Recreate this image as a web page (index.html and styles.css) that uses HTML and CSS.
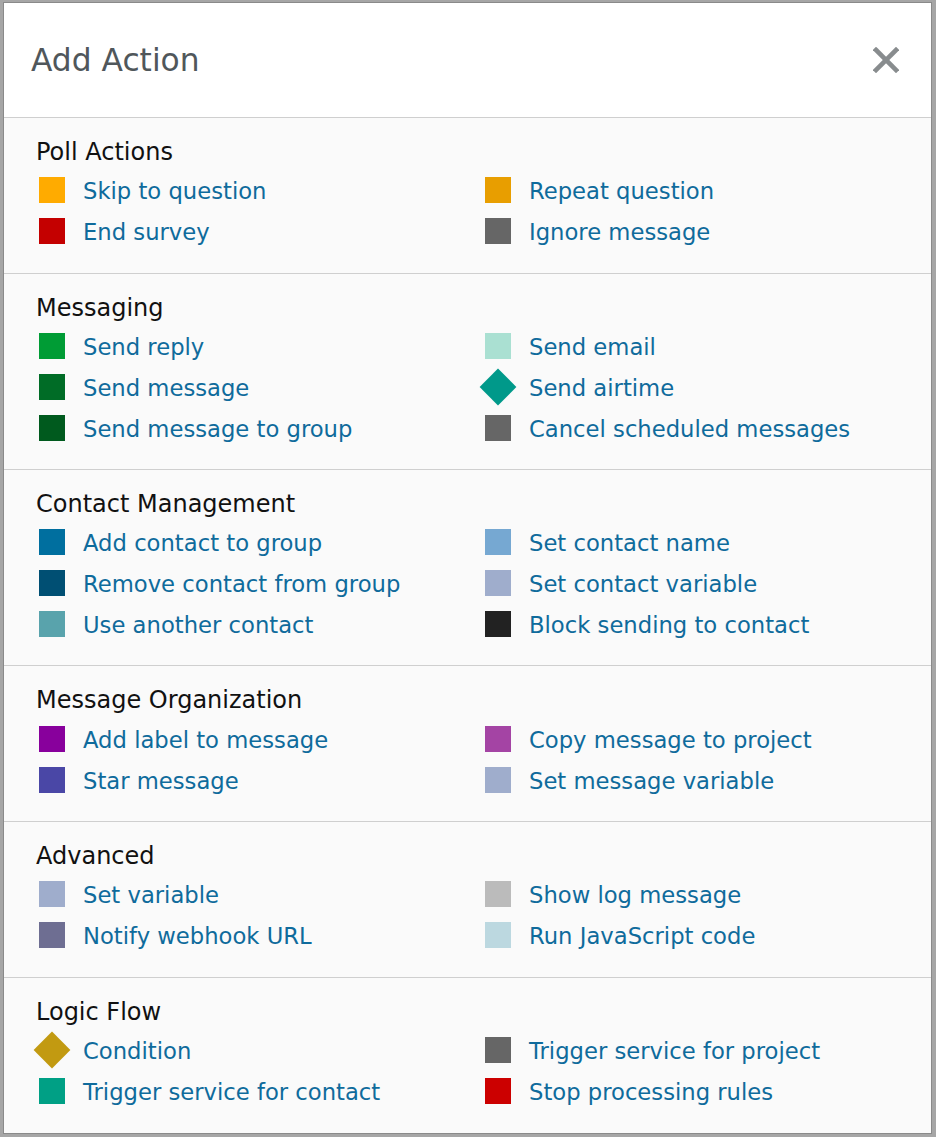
FILE: index.html
```html
<!DOCTYPE html>
<html>
<head>
<meta charset="utf-8">
<title>Add Action</title>
<link rel="stylesheet" href="styles.css">
</head>
<body>
<div class="modal">
  <div class="modal-header">
    <h1 class="modal-title">Add Action</h1>
    <svg class="close" width="26" height="26" viewBox="0 0 26 26" aria-label="Close">
      <line x1="3" y1="3" x2="23" y2="23" />
      <line x1="23" y1="3" x2="3" y2="23" />
    </svg>
  </div>
  <div class="modal-body">
    <section class="group">
      <h2 class="group-title">Poll Actions</h2>
      <div class="items">
        <a class="item"><span class="ico"><span class="sq c-skip"></span></span>Skip to question</a>
        <a class="item"><span class="ico"><span class="sq c-repeat"></span></span>Repeat question</a>
        <a class="item"><span class="ico"><span class="sq c-end"></span></span>End survey</a>
        <a class="item"><span class="ico"><span class="sq c-gray"></span></span>Ignore message</a>
      </div>
    </section>
    <section class="group">
      <h2 class="group-title">Messaging</h2>
      <div class="items">
        <a class="item"><span class="ico"><span class="sq c-reply"></span></span>Send reply</a>
        <a class="item"><span class="ico"><span class="sq c-email"></span></span>Send email</a>
        <a class="item"><span class="ico"><span class="sq c-msg"></span></span>Send message</a>
        <a class="item"><span class="ico"><span class="sq dia c-airtime"></span></span>Send airtime</a>
        <a class="item"><span class="ico"><span class="sq c-msggroup"></span></span>Send message to group</a>
        <a class="item"><span class="ico"><span class="sq c-gray"></span></span>Cancel scheduled messages</a>
      </div>
    </section>
    <section class="group">
      <h2 class="group-title">Contact Management</h2>
      <div class="items">
        <a class="item"><span class="ico"><span class="sq c-addgroup"></span></span>Add contact to group</a>
        <a class="item"><span class="ico"><span class="sq c-name"></span></span>Set contact name</a>
        <a class="item"><span class="ico"><span class="sq c-remove"></span></span>Remove contact from group</a>
        <a class="item"><span class="ico"><span class="sq c-var"></span></span>Set contact variable</a>
        <a class="item"><span class="ico"><span class="sq c-another"></span></span>Use another contact</a>
        <a class="item"><span class="ico"><span class="sq c-block"></span></span>Block sending to contact</a>
      </div>
    </section>
    <section class="group">
      <h2 class="group-title">Message Organization</h2>
      <div class="items">
        <a class="item"><span class="ico"><span class="sq c-label"></span></span>Add label to message</a>
        <a class="item"><span class="ico"><span class="sq c-copy"></span></span>Copy message to project</a>
        <a class="item"><span class="ico"><span class="sq c-star"></span></span>Star message</a>
        <a class="item"><span class="ico"><span class="sq c-var"></span></span>Set message variable</a>
      </div>
    </section>
    <section class="group">
      <h2 class="group-title">Advanced</h2>
      <div class="items">
        <a class="item"><span class="ico"><span class="sq c-var"></span></span>Set variable</a>
        <a class="item"><span class="ico"><span class="sq c-log"></span></span>Show log message</a>
        <a class="item"><span class="ico"><span class="sq c-webhook"></span></span>Notify webhook URL</a>
        <a class="item"><span class="ico"><span class="sq c-js"></span></span>Run JavaScript code</a>
      </div>
    </section>
    <section class="group">
      <h2 class="group-title">Logic Flow</h2>
      <div class="items">
        <a class="item"><span class="ico"><span class="sq dia c-cond"></span></span>Condition</a>
        <a class="item"><span class="ico"><span class="sq c-gray"></span></span>Trigger service for project</a>
        <a class="item"><span class="ico"><span class="sq c-trigcontact"></span></span>Trigger service for contact</a>
        <a class="item"><span class="ico"><span class="sq c-stop"></span></span>Stop processing rules</a>
      </div>
    </section>
  </div>
</div>
</body>
</html>
```

FILE: styles.css
```css
html, body {
  margin: 0;
  padding: 0;
}
body {
  background: #a6a6a6;
  width: 936px;
  height: 1137px;
  overflow: hidden;
  font-family: "DejaVu Sans", Verdana, sans-serif;
}
.modal {
  box-sizing: border-box;
  margin: 2px 0 0 3px;
  width: 929px;
  height: 1132px;
  border: 1px solid #8a8a8a;
  background: #fafafa;
  overflow: hidden;
}
.modal-header {
  display: flex;
  align-items: center;
  justify-content: space-between;
  height: 114px;
  padding: 0 32px 0 27px;
  background: #ffffff;
  border-bottom: 1px solid #cfcfcf;
}
.modal-title {
  margin: 0;
  font-size: 31.3px;
  font-weight: normal;
  line-height: 114px;
  color: #50575b;
}
.close {
  display: block;
  margin-top: -1px;
}
.close line {
  stroke: #888c8e;
  stroke-width: 4.6;
  stroke-linecap: square;
}
.modal-body {
  background: #fafafa;
}
.group {
  padding: 15px 0 20px 32px;
}
.group + .group {
  border-top: 1px solid #cfcfcf;
}
.group-title {
  margin: 0;
  font-size: 24px;
  font-weight: normal;
  line-height: 38px;
  color: #111111;
}
.items {
  display: grid;
  grid-template-columns: 446px 1fr;
  grid-auto-rows: 40.8px;
}
.item {
  display: flex;
  align-items: center;
  font-size: 22.7px;
  color: #0f6b9c;
  white-space: nowrap;
  cursor: pointer;
}
.ico {
  display: flex;
  align-items: center;
  justify-content: center;
  width: 32px;
  height: 36px;
  margin-right: 15px;
  margin-top: -2px;
  flex: none;
}
.sq {
  display: block;
  width: 26px;
  height: 26px;
}
.sq.dia {
  transform: rotate(45deg);
}
.c-skip { background: #ffab00; }
.c-repeat { background: #e89e00; }
.c-end { background: #c40000; }
.c-gray { background: #666666; }
.c-reply { background: #009c35; }
.c-email { background: #aae0d2; }
.c-msg { background: #006c26; }
.c-airtime { background: #00998a; }
.c-msggroup { background: #005a1e; }
.c-addgroup { background: #006f9f; }
.c-name { background: #76a8d2; }
.c-remove { background: #004f73; }
.c-var { background: #9fadcc; }
.c-another { background: #59a3ac; }
.c-block { background: #222222; }
.c-label { background: #88009c; }
.c-copy { background: #a444a4; }
.c-star { background: #4a47a6; }
.c-log { background: #bbbbbb; }
.c-webhook { background: #6e6e92; }
.c-js { background: #bcd8e0; }
.c-cond { background: #c29a11; }
.c-trigcontact { background: #00a085; }
.c-stop { background: #cc0000; }
```
